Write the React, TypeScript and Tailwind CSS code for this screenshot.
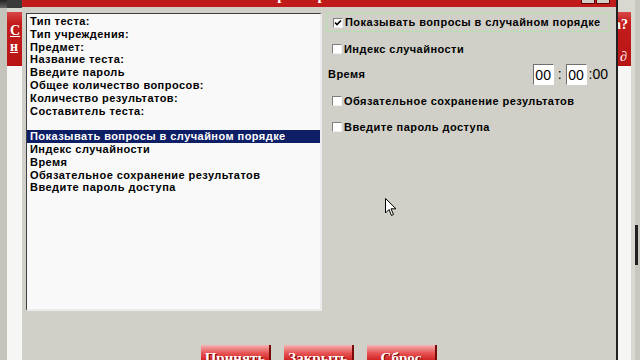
import React from "react";

const listItems = [
  "Тип теста:",
  "Тип учреждения:",
  "Предмет:",
  "Название теста:",
  "Введите пароль",
  "Общее количество вопросов:",
  "Количество результатов:",
  "Составитель теста:",
  "",
  "Показывать вопросы в случайном порядке",
  "Индекс случайности",
  "Время",
  "Обязательное сохранение результатов",
  "Введите пароль доступа",
];

function CheckBox({ checked }: { checked?: boolean }) {
  return (
    <div className="w-[10px] h-[10px] bg-white border-t border-l border-t-[#808080] border-l-[#808080] border-b border-r border-b-[#f0f0f0] border-r-[#f0f0f0] flex items-center justify-center shrink-0">
      {checked && (
        <svg width="8" height="8" viewBox="0 0 8 8">
          <path d="M1 3.5 L3 5.5 L7 1.5" stroke="#000" strokeWidth="1.6" fill="none" />
        </svg>
      )}
    </div>
  );
}

function TimeBox({ v }: { v: string }) {
  return (
    <div className="w-[21px] h-[21px] bg-white border-t border-l border-t-[#707070] border-l-[#707070] border-b border-r border-b-[#ffffff] border-r-[#ffffff] flex items-center justify-center text-[14px] leading-none text-black font-['Liberation_Sans',Arial,sans-serif]">
      {v}
    </div>
  );
}

function RedButton({ label }: { label: string }) {
  return (
    <div className="w-[70px] h-[22px] shrink-0 bg-[linear-gradient(to_bottom,#f5b5b5,#e85656_35%,#cc1a1a_75%,#b81010)] border-r-2 border-r-[#7a0a0a] flex justify-center pt-[6px]">
      <span className="text-white font-bold text-[15px] leading-none font-['Liberation_Serif',serif] [text-shadow:1px_1px_0_#700]">
        {label}
      </span>
    </div>
  );
}

export default function App() {
  return (
    <div className="relative w-[640px] h-[360px] overflow-hidden bg-[#d0d0c8] flex font-['Liberation_Sans',Arial,sans-serif]">
      {/* left background strip */}
      <div className="w-[22px] h-full flex shrink-0">
        <div className="w-[7px] h-full flex flex-col">
          <div className="h-[8px] shrink-0 bg-[linear-gradient(to_bottom,#222,#666)]" />
          <div className="flex-1 bg-[#c4c4bc]" />
        </div>
        <div className="w-[15px] h-full flex flex-col">
          <div className="h-[8px] shrink-0 bg-[#3a3a3a]" />
          <div className="h-[4px] shrink-0 bg-[#d8d8d0]" />
          <div className="h-[54px] shrink-0 bg-[linear-gradient(to_bottom,#d84848,#c41c1c_20%,#b81414)] flex flex-col items-start pl-[3px] pt-[12px] gap-[2px]">
            <span className="text-white font-bold text-[14px] leading-none font-['Liberation_Serif',serif] underline">С</span>
            <span className="text-white font-bold text-[14px] leading-none font-['Liberation_Serif',serif] underline">н</span>
          </div>
          <div className="flex-1 bg-[#f6f6f4]" />
        </div>
      </div>

      {/* dialog */}
      <div className="w-[596px] h-full shrink-0 flex flex-col bg-[#d0d0c8] border-r-2 border-r-[#202020]">
        <div className="h-[7px] shrink-0 bg-[#c01a1a] relative overflow-hidden">
          <span className="absolute top-[-12px] left-[236px] text-white font-bold text-[15px] leading-none font-['Liberation_Serif',serif] whitespace-nowrap">
            Параметры теста
          </span>
          <div className="absolute right-[6px] top-[-6px] flex gap-[1px]">
            <div className="w-[14px] h-[10px] bg-[#d0d0c8] border border-[#600]" />
            <div className="w-[14px] h-[10px] bg-[#d0d0c8] border border-[#600]" />
          </div>
        </div>
        <div className="flex pl-[4px] pt-[6px] shrink-0">
          {/* list */}
          <div className="w-[296px] h-[298px] shrink-0 bg-[#f9f9f9] border-t border-l border-t-[#404040] border-l-[#404040] border-b-2 border-r-2 border-b-[#ececec] border-r-[#ececec] pt-[1px] text-[11px] font-bold tracking-[0.45px] text-black">
            {listItems.map((t, i) => (
              <div
                key={i}
                className={
                  "h-[12.8px] leading-[12.8px] pl-[3px] whitespace-nowrap " +
                  (i === 9 ? "bg-[#0f1f66] text-white" : "")
                }
              >
                {t}
              </div>
            ))}
          </div>
          {/* right panel */}
          <div className="w-[284px] ml-[4px] flex flex-col text-[11px] font-bold tracking-[0.45px] text-black">
            <div className="h-[19px] border border-[#b4e0b0] flex items-center gap-[2px] pl-[6px] whitespace-nowrap">
              <CheckBox checked />
              <span>Показывать вопросы в случайном порядке</span>
            </div>
            <div className="h-[12px] mt-[11px] flex items-center gap-[2px] pl-[6px]">
              <CheckBox />
              <span>Индекс случайности</span>
            </div>
            <div className="mt-[9px] h-[21px] flex items-center pl-[2px]">
              <span className="flex-1">Время</span>
              <div className="flex items-center mr-[2px] font-normal text-[14px] tracking-normal">
                <TimeBox v="00" />
                <span className="mx-[4px] text-[14px]">:</span>
                <TimeBox v="00" />
                <span className="ml-[2px] text-[14px]">:00</span>
              </div>
            </div>
            <div className="h-[12px] mt-[10px] flex items-center gap-[2px] pl-[6px]">
              <CheckBox />
              <span>Обязательное сохранение результатов</span>
            </div>
            <div className="h-[12px] mt-[14px] flex items-center gap-[2px] pl-[6px]">
              <CheckBox />
              <span>Введите пароль доступа</span>
            </div>
          </div>
        </div>
        <div className="mt-[34px] shrink-0 flex justify-center gap-[13px]">
          <RedButton label="Принять" />
          <RedButton label="Закрыть" />
          <RedButton label="Сброс" />
        </div>
      </div>

      {/* right background strip */}
      <div className="w-[22px] h-full flex shrink-0">
        <div className="w-[13px] h-full flex flex-col">
          <div className="h-[12px] shrink-0 bg-[#d8d8d0]" />
          <div className="h-[54px] shrink-0 bg-[linear-gradient(to_bottom,#d84848,#c41c1c_20%,#b81414)] flex flex-col items-start pt-[6px] gap-[18px] overflow-hidden">
            <span className="text-white font-bold text-[14px] leading-none font-['Liberation_Serif',serif] -ml-[4px]">а?</span>
            <span className="text-white italic text-[14px] leading-none font-['Liberation_Serif',serif] pl-[2px]">∂</span>
          </div>
          <div className="flex-1 bg-[#f6f6f4]" />
        </div>
        <div className="w-[4px] h-full bg-[#d8d8d0]" />
        <div className="w-[5px] h-full bg-[#c8c8c0] flex flex-col">
          <div className="h-[225px] shrink-0" />
          <div className="h-[40px] shrink-0 bg-[#202020] w-[3px]" />
        </div>
      </div>

      {/* mouse cursor */}
      <svg className="absolute left-[385px] top-[198px]" width="12" height="19" viewBox="0 0 12 19">
        <path d="M0.5 0.5 L0.5 15 L4 11.5 L6.5 17.5 L8.5 16.5 L6 10.8 L11 10.8 Z" fill="#fff" stroke="#000" strokeWidth="1" />
      </svg>
    </div>
  );
}
